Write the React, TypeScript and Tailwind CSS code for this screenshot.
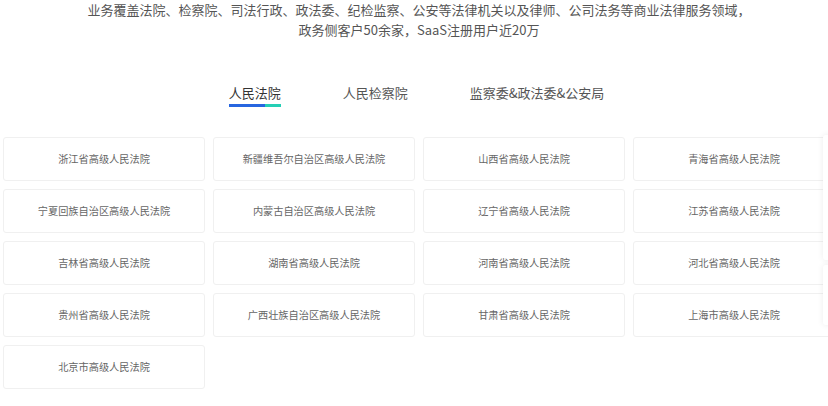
const courts = [
    '浙江省高级人民法院',
    '新疆维吾尔自治区高级人民法院',
    '山西省高级人民法院',
    '青海省高级人民法院',
    '宁夏回族自治区高级人民法院',
    '内蒙古自治区高级人民法院',
    '辽宁省高级人民法院',
    '江苏省高级人民法院',
    '吉林省高级人民法院',
    '湖南省高级人民法院',
    '河南省高级人民法院',
    '河北省高级人民法院',
    '贵州省高级人民法院',
    '广西壮族自治区高级人民法院',
    '甘肃省高级人民法院',
    '上海市高级人民法院',
    '北京市高级人民法院',
];

const tabs = ['人民法院', '人民检察院', '监察委&政法委&公安局'];

export default function App() {
    return (
        <div
            className="relative w-[828px] h-[406px] overflow-hidden bg-white"
            style={{ fontFamily: '"Noto Sans CJK SC", "Noto Sans", sans-serif' }}
        >
            <div className="ml-[3px] w-[832px]">
                <p className="text-center text-[13px] leading-[20px] text-[#555]">
                    业务覆盖法院、检察院、司法行政、政法委、纪检监察、公安等法律机关以及律师、公司法务等商业法律服务领域，
                    <br />
                    政务侧客户50余家，SaaS注册用户近20万
                </p>

                <div className="mt-[43px] flex justify-center gap-[62px] pr-[5px]">
                    {tabs.map((tab, i) => (
                        <div key={tab} className="flex flex-col">
                            <span
                                className={
                                    i === 0
                                        ? 'text-[13px] leading-[20px] text-[#333]'
                                        : 'text-[13px] leading-[20px] text-[#555]'
                                }
                            >
                                {tab}
                            </span>
                            {i === 0 && (
                                <div className="mt-[1px] flex h-[3px] w-full">
                                    <div className="w-[70%] bg-[#2766e0]" />
                                    <div className="flex-1 bg-[#25cfb5]" />
                                </div>
                            )}
                        </div>
                    ))}
                </div>

                <div className="mt-[30px] grid grid-cols-4 gap-[8px]">
                    {courts.map((name) => (
                        <div
                            key={name}
                            className="flex h-[44px] items-center justify-center rounded-[3px] border border-[#f0f0f0] text-[10.2px] text-[#666]"
                        >
                            {name}
                        </div>
                    ))}
                </div>
            </div>

            <div className="absolute left-[823px] top-[135px] h-[125px] w-[20px] rounded-l-[3px] bg-white shadow-[0_0_6px_rgba(0,0,0,0.08)]" />
            <div className="absolute left-[823px] top-[265px] h-[60px] w-[20px] rounded-l-[3px] bg-white shadow-[0_0_6px_rgba(0,0,0,0.08)]" />
        </div>
    );
}
